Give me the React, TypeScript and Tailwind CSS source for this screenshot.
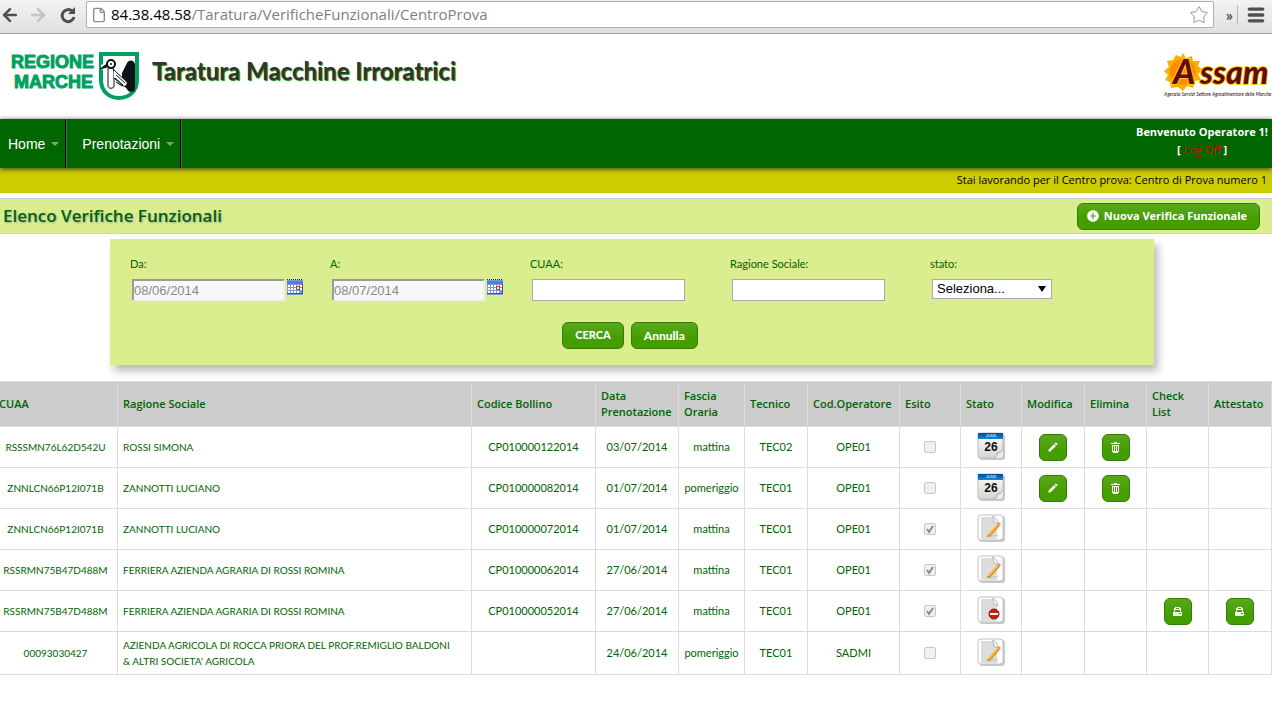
import React from 'react';
import { ArrowLeft, ArrowRight, Star, Menu, File } from 'lucide-react';
import { MdAddCircle, MdEdit } from 'react-icons/md';

type Stato = 'calendario' | 'bozza' | 'bloccato';

interface Verifica {
    cuaa: string;
    ragione: string;
    bollino: string;
    data: string;
    fascia: string;
    tecnico: string;
    operatore: string;
    esito: boolean;
    stato: Stato;
}

const verifiche: Verifica[] = [
    { cuaa: 'RSSSMN76L62D542U', ragione: 'ROSSI SIMONA', bollino: 'CP010000122014', data: '03/07/2014', fascia: 'mattina', tecnico: 'TEC02', operatore: 'OPE01', esito: false, stato: 'calendario' },
    { cuaa: 'ZNNLCN66P12I071B', ragione: 'ZANNOTTI LUCIANO', bollino: 'CP010000082014', data: '01/07/2014', fascia: 'pomeriggio', tecnico: 'TEC01', operatore: 'OPE01', esito: false, stato: 'calendario' },
    { cuaa: 'ZNNLCN66P12I071B', ragione: 'ZANNOTTI LUCIANO', bollino: 'CP010000072014', data: '01/07/2014', fascia: 'mattina', tecnico: 'TEC01', operatore: 'OPE01', esito: true, stato: 'bozza' },
    { cuaa: 'RSSRMN75B47D488M', ragione: 'FERRIERA AZIENDA AGRARIA DI ROSSI ROMINA', bollino: 'CP010000062014', data: '27/06/2014', fascia: 'mattina', tecnico: 'TEC01', operatore: 'OPE01', esito: true, stato: 'bozza' },
    { cuaa: 'RSSRMN75B47D488M', ragione: 'FERRIERA AZIENDA AGRARIA DI ROSSI ROMINA', bollino: 'CP010000052014', data: '27/06/2014', fascia: 'mattina', tecnico: 'TEC01', operatore: 'OPE01', esito: true, stato: 'bloccato' },
    { cuaa: '00093030427', ragione: "AZIENDA AGRICOLA DI ROCCA PRIORA DEL PROF.REMIGLIO BALDONI & ALTRI SOCIETA' AGRICOLA", bollino: '', data: '24/06/2014', fascia: 'pomeriggio', tecnico: 'TEC01', operatore: 'SADMI', esito: false, stato: 'bozza' },
];

const colonne = [
    { nome: 'CUAA', width: 'w-[124px]' },
    { nome: 'Ragione Sociale', width: '' },
    { nome: 'Codice Bollino', width: 'w-[124px]' },
    { nome: 'Data Prenotazione', width: 'w-[83px]' },
    { nome: 'Fascia Oraria', width: 'w-[66px]' },
    { nome: 'Tecnico', width: 'w-[63px]' },
    { nome: 'Cod.Operatore', width: 'w-[92px]' },
    { nome: 'Esito', width: 'w-[61px]' },
    { nome: 'Stato', width: 'w-[61px]' },
    { nome: 'Modifica', width: 'w-[63px]' },
    { nome: 'Elimina', width: 'w-[62px]' },
    { nome: 'Check List', width: 'w-[62px]' },
    { nome: 'Attestato', width: 'w-[63px]' },
];

const green = 'border border-[#327e04] bg-linear-to-b from-[#5aa81c] to-[#459e00] to-60% text-white rounded-md';

function RegioneMarcheLogo() {
    return (
        <svg width="130" height="52" viewBox="0 0 130 52" role="img" aria-label="Regione Marche">
            <g fill="#00a160" stroke="#00a160" strokeWidth="1" fontFamily="'Liberation Sans', sans-serif" fontWeight="700" fontSize="18">
                <text x="1" y="17">REGIONE</text>
                <text x="4" y="37">MARCHE</text>
            </g>
            <path d="M91 3h36v26c0 11-8 18-18 18s-18-7-18-18z" fill="#fff" stroke="#00a160" strokeWidth="4" />
            <path d="M112 22l5-10c2-4 8-3 8 2v24c0 4-7 4-8 0l-5-5z" fill="#0c1418" />
            <path d="M91 16h8" stroke="#fff" strokeWidth="5" />
            <path d="M98 17v18c0 3 6 3 6 0V21l-1-4z" fill="#fff" stroke="#0c1418" />
            <path d="M104 19l13 12c1 3-2 5-4 4l-9-8" fill="#fff" stroke="#0c1418" />
            <path d="M106 24l9 8M105 27l8 7M106 31l6 4" stroke="#0c1418" />
            <circle cx="101" cy="13" r="4" fill="#fff" stroke="#0c1418" strokeWidth="2" />
            <path d="M90 18l7-5v3z" fill="#0c1418" stroke="#0c1418" />
            <circle cx="101" cy="13" r="1" fill="#0c1418" />
        </svg>
    );
}

function AssamLogo() {
    return (
        <svg className="overflow-visible" width="108" height="48" viewBox="0 0 108 48" role="img" aria-label="Assam">
            <path d="M19 0l3 5 6-2 1 5 7 0-2 5 5 4-5 4 3 6-6 1-2 7-6-2-4 5-5-4-7 1-1-6-5-2 3-5-4-4 5-4-2-6 6-1 3-5 5 2z" fill="#f9b000" />
            <circle cx="19" cy="19" r="13" fill="#ff8c00" />
            <g fill="#650a0a" stroke="#ffd21c" strokeWidth="2" paintOrder="stroke" fontFamily="Lato, sans-serif" fontStyle="italic" fontWeight="900">
                <text x="9" y="31" fontSize="34">A</text>
                <text x="36" y="31" fontSize="32">ssam</text>
            </g>
            <text x="0" y="43" fontSize="5" fontFamily="Lato, sans-serif" fontStyle="italic" fontWeight="400" fill="#2c0808">Agenzia Servizi Settore Agroalimentare delle Marche</text>
        </svg>
    );
}

function ReloadIcon() {
    return (
        <svg width="20" height="20" viewBox="0 0 20 20">
            <path d="M14 6a6 6 0 1 0 2 6" fill="none" stroke="#505050" strokeWidth="3" />
            <path d="M17 2v7h-7z" fill="#505050" />
        </svg>
    );
}

function DatePickerIcon() {
    return (
        <svg width="16" height="16" viewBox="0 0 16 16" shapeRendering="crispEdges">
            <path d="M0 1h16v15H0z" fill="#7c9ad8" />
            <path d="M0 2h16v3H0z" fill="#4a7ff0" />
            <path d="M0 0h1v1H0zM2 0h1v1H2zM4 0h1v1H4zM6 0h1v1H6zM8 0h1v1H8zM10 0h1v1h-1zM12 0h1v1h-1zM14 0h1v1h-1z" fill="#222" />
            <path d="M1 6h2v2H1zM4 6h2v2H4zM7 6h2v2H7zM10 6h2v2h-2zM13 6h2v2h-2zM1 9h2v2H1zM4 9h2v2H4zM7 9h2v2H7zM13 9h2v2h-2zM1 12h2v2H1zM4 12h2v2H4zM7 12h2v2H7zM10 12h2v2h-2z" fill="#fff" />
            <path d="M9 7h4v4H9z" fill="#dc3519" />
            <path d="M10 8h2v2h-2z" fill="#fff" />
            <path d="M0 14h16v1H0zM15 5h1v10h-1z" fill="#34558f" />
        </svg>
    );
}

function PrinterIcon() {
    return (
        <svg width="10" height="9" viewBox="0 0 10 9" shapeRendering="crispEdges" fill="#f4f4f4">
            <path fillRule="evenodd" d="M2 0h5v1h1v4h1v4H0V5h1V1h1zM3 1v1h3V1zM2 3v2h5V3zM6 6v1h2V6z" />
        </svg>
    );
}

function TrashIcon() {
    return (
        <svg width="10" height="11" viewBox="0 0 10 11" shapeRendering="crispEdges" fill="#f4f4f4">
            <path fillRule="evenodd" d="M3 0h3v1h3v1H0V1h3zM1 3h7v7H7v1H2v-1H1zM2 4v5h1V4zM4 4v5h1V4zM6 4v5h1V4z" />
        </svg>
    );
}

function StatoIcon({ stato }: { stato: Stato }) {
    return (
        <svg className="mx-auto block" width="28" height="30" viewBox="0 0 28 30" role="img" aria-label={stato}>
            <defs>
                <linearGradient id="foglio" x1="0" y1="0" x2="0" y2="1">
                    <stop offset="0" stopColor="#fff" />
                    <stop offset="1" stopColor="#d4d4d4" />
                </linearGradient>
                <linearGradient id="testata" x1="0" y1="0" x2="0" y2="1">
                    <stop offset="0" stopColor="#064a94" />
                    <stop offset="1" stopColor="#1288d8" />
                </linearGradient>
            </defs>
            <rect x="2" y="2" width="26" height="26" rx="3" fill="#c9c9c9" />
            {stato === 'calendario' ? (
                <>
                    <rect x="1" y="1" width="25" height="25" rx="2" fill="url(#foglio)" stroke="#bdbdbd" />
                    <path d="M1 1h25v6H1z" fill="url(#testata)" />
                    <text x="14" y="5" textAnchor="middle" fontSize="4" fontWeight="700" fontFamily="Liberation Sans, sans-serif" fill="#9dd4ff">JUNE</text>
                    <text x="14" y="19" textAnchor="middle" fontSize="12" fontWeight="700" fontFamily="Liberation Sans, sans-serif" fill="#111">26</text>
                    <path d="M17 26c3-1 3-3 3-5 3 0 5-2 6-4v7l-2 2z" fill="#ececec" />
                    <path d="M17 26c3-1 3-3 3-5 3 0 5-2 6-4" fill="none" stroke="#a8a8a8" />
                </>
            ) : (
                <>
                    <rect x="1" y="1" width="25" height="25" rx="3" fill="#fff" stroke="#c2c2c2" />
                    <path d="M4 3h11l5 6v16H4z" fill="#dcdcdc" />
                    <path d="M15 2c2 2 1 4 2 6l4 2c0-3-2-7-6-8z" fill="#f5f5f5" stroke="#b5b5b5" />
                    {stato === 'bozza' ? (
                        <>
                            <path d="M12 23l6-2 3 1" fill="none" stroke="#c4c4c4" />
                            <path d="M12 22L22 11" stroke="#b87405" strokeWidth="2" />
                            <path d="M11 22L21 11" stroke="#ffb31a" strokeWidth="2" />
                            <path d="M21 11l2-2" stroke="#ee8d8d" strokeWidth="3" />
                            <path d="M10 23l1-2 1 1z" fill="#555" />
                        </>
                    ) : (
                        <>
                            <circle cx="17" cy="18" r="5" fill="#d3190f" stroke="#971010" />
                            <path d="M13 17h8v2h-8z" fill="#fff" />
                        </>
                    )}
                </>
            )}
        </svg>
    );
}

function EsitoCheckbox({ checked }: { checked: boolean }) {
    return (
        <span className="mx-auto grid h-3 w-3">
            <input type="checkbox" aria-label="Esito" defaultChecked={checked} disabled className="peer col-start-1 row-start-1 h-3 w-3 appearance-none rounded-xs border border-[#c8c8c8] bg-[#f0f0f0]" />
            <svg className="pointer-events-none invisible col-start-1 row-start-1 peer-checked:visible" width="12" height="12" viewBox="0 0 12 12">
                <path d="M3 6l2 3 4-6" fill="none" stroke="#8c8c8c" strokeWidth="2" />
            </svg>
        </span>
    );
}

function IconButton({ label, children }: { label: string; children: React.ReactNode }) {
    return (
        <button type="button" aria-label={label} className={`${green} mx-auto flex h-[27px] w-7 items-center justify-center`}>
            {children}
        </button>
    );
}

function BrowserBar() {
    return (
        <div className="flex h-[34px] items-center border-b border-[#a3a3a3] bg-linear-to-b from-[#f3f3f3] to-[#e0e0e0] pr-1.5 pb-1">
            <button type="button" aria-label="Indietro"><ArrowLeft className="h-5 w-5 text-[#505050]" strokeWidth={3} /></button>
            <button type="button" aria-label="Avanti" className="ml-2"><ArrowRight className="h-5 w-5 text-[#c4c4c4]" strokeWidth={3} /></button>
            <button type="button" aria-label="Ricarica" className="ml-2.5"><ReloadIcon /></button>
            <div className="ml-2 flex h-[27px] grow items-center rounded-xs border border-[#b0b0b0] bg-white px-1 font-['Open_Sans',sans-serif] text-[15px] text-[#808080]">
                <File className="mr-1 h-4 w-4 text-[#8a8a8a]" strokeWidth={2} />
                <span><span className="text-black">84.38.48.58</span>/Taratura/VerificheFunzionali/CentroProva</span>
                <Star className="ml-auto h-5 w-5 text-[#808080]" strokeWidth={1} />
            </div>
            <span className="ml-3 text-base font-bold text-[#505050]">»</span>
            <span className="ml-1 h-5 w-px bg-[#b5b5b5]" />
            <button type="button" aria-label="Menu" className="ml-2"><Menu className="h-5 w-5 text-[#505050]" strokeWidth={4} /></button>
        </div>
    );
}

function NavItem({ label, className }: { label: string; className: string }) {
    return (
        <a href="#" className={`flex items-center border-r border-black pr-1.5 font-['Liberation_Sans',sans-serif] text-sm text-white shadow-[1px_0_0_#556655] ${className}`}>
            {label}
            <span className="ml-1.5 border-x-4 border-t-4 border-x-transparent border-t-[#8a998a]" />
        </a>
    );
}

function SearchForm() {
    const label = 'block leading-4';
    const text = "h-[22px] w-[153px] border border-[#a9a9a9] bg-white font-['Liberation_Sans',sans-serif] text-[13px]";
    const date = "h-[22px] w-[153px] border-2 border-t-[#9a9a9a] border-r-[#eeeeee] border-b-[#eeeeee] border-l-[#9a9a9a] bg-[#f8f8f8] font-['Liberation_Sans',sans-serif] text-[13px] text-[#8a8a8a]";
    return (
        <form className="mt-[5px] mr-[118px] ml-[110px] bg-[#daee90] pt-[17px] pr-6 pb-4 pl-5 shadow-[4px_6px_8px_#bbbbbb]">
            <div className="grid grid-cols-5">
                <div>
                    <label htmlFor="da" className={label}>Da:</label>
                    <div className="mt-[7px] ml-0.5 flex items-start gap-0.5">
                        <input id="da" className={date} defaultValue="08/06/2014" disabled />
                        <button type="button" aria-label="Scegli data iniziale"><DatePickerIcon /></button>
                    </div>
                </div>
                <div>
                    <label htmlFor="a" className={label}>A:</label>
                    <div className="mt-[7px] ml-0.5 flex items-start gap-0.5">
                        <input id="a" className={date} defaultValue="08/07/2014" disabled />
                        <button type="button" aria-label="Scegli data finale"><DatePickerIcon /></button>
                    </div>
                </div>
                <div>
                    <label htmlFor="cuaa" className={label}>CUAA:</label>
                    <input id="cuaa" className={`${text} mt-[7px] ml-0.5 block`} />
                </div>
                <div>
                    <label htmlFor="ragione" className={label}>Ragione Sociale:</label>
                    <input id="ragione" className={`${text} mt-[7px] ml-0.5 block`} />
                </div>
                <div>
                    <label htmlFor="stato" className={label}>stato:</label>
                    <div className="relative mt-[7px] ml-0.5 w-[120px]">
                        <select id="stato" className="block h-5 w-full appearance-none border border-[#a9a9a9] bg-white pl-1 font-['Liberation_Sans',sans-serif] text-[13px] leading-4 text-black">
                            <option>Seleziona...</option>
                        </select>
                        <span className="pointer-events-none absolute top-[7px] right-1.5 border-x-4 border-t-[6px] border-x-transparent border-t-black" />
                    </div>
                </div>
            </div>
            <div className="mt-[21px] flex justify-center gap-[7px]">
                <button type="submit" className={`${green} h-[27px] px-3 text-[11px] font-black`}>CERCA</button>
                <button type="reset" className={`${green} h-[27px] px-3 text-xs font-black`}>Annulla</button>
            </div>
        </form>
    );
}

function VerificheTable() {
    return (
        <table className="mt-4 -ml-[7px] w-[calc(100%+7px)] table-fixed border-collapse leading-4 [&_td]:border [&_td]:border-[#dcdcdc] [&_th]:border [&_th]:border-[#dcdcdc]">
            <thead>
                <tr className="h-[45px] bg-[#cccccc]">
                    {colonne.map((c) => (
                        <th key={c.nome} className={`${c.width} pr-1 pl-[5px] text-left font-['Open_Sans',sans-serif] font-semibold`}>{c.nome}</th>
                    ))}
                </tr>
            </thead>
            <tbody>
                {verifiche.map((v) => (
                    <tr key={v.cuaa + v.bollino} className="h-[41px] text-center last:h-[43px]">
                        <td className="text-[10px]">{v.cuaa}</td>
                        <td className="pr-4 pl-[5px] text-left text-[10px]">{v.ragione}</td>
                        <td>{v.bollino}</td>
                        <td>{v.data}</td>
                        <td>{v.fascia}</td>
                        <td>{v.tecnico}</td>
                        <td>{v.operatore}</td>
                        <td><EsitoCheckbox checked={v.esito} /></td>
                        <td><StatoIcon stato={v.stato} /></td>
                        <td>{v.stato === 'calendario' && <IconButton label="Modifica"><MdEdit className="h-3 w-3" /></IconButton>}</td>
                        <td>{v.stato === 'calendario' && <IconButton label="Elimina"><TrashIcon /></IconButton>}</td>
                        <td>{v.stato === 'bloccato' && <IconButton label="Stampa check list"><PrinterIcon /></IconButton>}</td>
                        <td>{v.stato === 'bloccato' && <IconButton label="Stampa attestato"><PrinterIcon /></IconButton>}</td>
                    </tr>
                ))}
            </tbody>
        </table>
    );
}

export default function App() {
    return (
        <div className="min-h-screen overflow-hidden bg-white font-[Lato,sans-serif] text-[11px] text-[#006400]">
            <BrowserBar />
            <header className="flex h-[85px] items-center pl-2.5">
                <RegioneMarcheLogo />
                <h1 className="mb-3 ml-3 text-2xl font-bold text-[#333333] [text-shadow:1px_1px_1px_#008000]">Taratura Macchine Irroratrici</h1>
                <div className="ml-auto"><AssamLogo /></div>
            </header>
            <nav className="relative flex h-[49px] bg-[#006600] shadow-[0_1px_5px_#333333]">
                <NavItem label="Home" className="pl-2" />
                <NavItem label="Prenotazioni" className="pl-4" />
                <div className="ml-auto pt-1 pr-1 text-center font-['Open_Sans',sans-serif] leading-[18px] font-bold text-white">
                    <p>Benvenuto Operatore 1!</p>
                    <p>[ <a href="#" className="font-normal text-[#e00000] underline">Log Off</a> ]</p>
                </div>
            </nav>
            <p className="h-[25px] bg-[#cccc00] pr-[5px] text-right font-['Open_Sans',sans-serif] leading-6 text-black">Stai lavorando per il Centro prova: Centro di Prova numero 1</p>
            <div className="mt-[5px] flex h-9 items-center justify-between border-y border-[#cccccc] bg-[#daee90] pr-3 pl-[3px]">
                <h2 className="font-['Open_Sans',sans-serif] text-[17px] font-semibold [text-shadow:1px_1px_2px_#aaaaaa]">Elenco Verifiche Funzionali</h2>
                <button type="button" className={`${green} flex h-[27px] items-center gap-1 px-2 pr-3 font-['Open_Sans',sans-serif] text-[11px] font-bold`}>
                    <MdAddCircle className="h-3.5 w-3.5" />
                    Nuova Verifica Funzionale
                </button>
            </div>
            <SearchForm />
            <VerificheTable />
        </div>
    );
}
